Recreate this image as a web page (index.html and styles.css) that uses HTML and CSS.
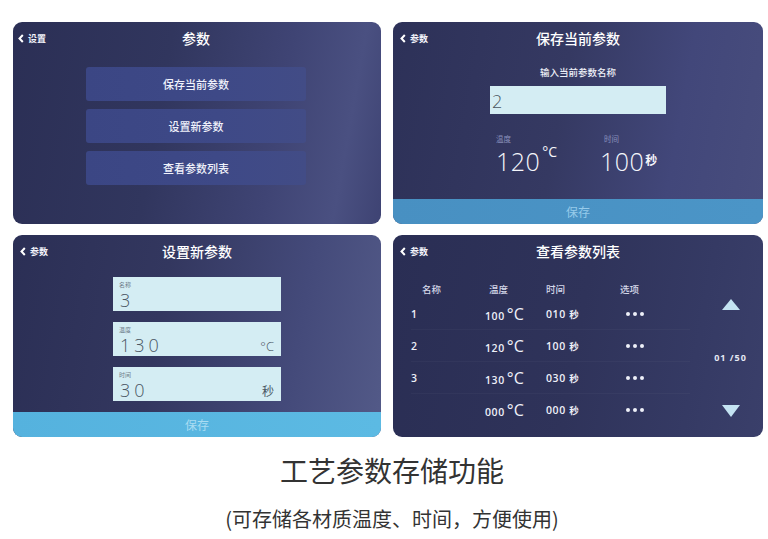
FILE: index.html
```html
<!DOCTYPE html>
<html lang="zh-CN">
<head>
<meta charset="utf-8">
<title>工艺参数存储功能</title>
<link rel="stylesheet" href="styles.css">
</head>
<body>
<div class="page">
  <div class="grid">
    <section class="panel p1">
      <header class="bar">
        <span class="back"><svg class="chev" viewBox="0 0 6 9" width="6" height="9"><path d="M4.8 1 L1.5 4.5 L4.8 8" fill="none" stroke="#fff" stroke-width="2"/></svg>设置</span>
        <h2 class="title">参数</h2>
        <span></span>
      </header>
      <div class="menu">
        <div class="menu-btn">保存当前参数</div>
        <div class="menu-btn">设置新参数</div>
        <div class="menu-btn">查看参数列表</div>
      </div>
    </section>

    <section class="panel p2">
      <header class="bar">
        <span class="back"><svg class="chev" viewBox="0 0 6 9" width="6" height="9"><path d="M4.8 1 L1.5 4.5 L4.8 8" fill="none" stroke="#fff" stroke-width="2"/></svg>参数</span>
        <h2 class="title">保存当前参数</h2>
        <span></span>
      </header>
      <div class="prompt">输入当前参数名称</div>
      <div class="name-input">2</div>
      <div class="readout">
        <div class="read temp">
          <div class="read-label">温度</div>
          <div class="read-value"><span class="num">120</span><span class="deg">°C</span></div>
        </div>
        <div class="read time">
          <div class="read-label">时间</div>
          <div class="read-value"><span class="num">100</span><span class="sec">秒</span></div>
        </div>
      </div>
      <div class="save save-dim">保存</div>
    </section>

    <section class="panel p3">
      <header class="bar">
        <span class="back"><svg class="chev" viewBox="0 0 6 9" width="6" height="9"><path d="M4.8 1 L1.5 4.5 L4.8 8" fill="none" stroke="#fff" stroke-width="2"/></svg>参数</span>
        <h2 class="title">设置新参数</h2>
        <span></span>
      </header>
      <div class="fields">
        <div class="field">
          <div class="f-label">名称</div>
          <div class="f-value">3</div>
          <div class="f-unit"></div>
        </div>
        <div class="field">
          <div class="f-label">温度</div>
          <div class="f-value">130</div>
          <div class="f-unit">°C</div>
        </div>
        <div class="field">
          <div class="f-label">时间</div>
          <div class="f-value">30</div>
          <div class="f-unit cjk">秒</div>
        </div>
      </div>
      <div class="save save-bright">保存</div>
    </section>

    <section class="panel p4">
      <header class="bar">
        <span class="back"><svg class="chev" viewBox="0 0 6 9" width="6" height="9"><path d="M4.8 1 L1.5 4.5 L4.8 8" fill="none" stroke="#fff" stroke-width="2"/></svg>参数</span>
        <h2 class="title">查看参数列表</h2>
        <span></span>
      </header>
      <div class="list">
        <div class="table">
          <div class="row head">
            <span class="c1 h1">名称</span>
            <span class="c2 h2c">温度</span>
            <span class="c3">时间</span>
            <span class="c4">选项</span>
          </div>
          <div class="row data">
            <span class="c1">1</span>
            <span class="c2">100<span class="tdeg">°C</span></span>
            <span class="c3">010 <span class="tsec">秒</span></span>
            <span class="c4 dots"><i></i><i></i><i></i></span>
          </div>
          <div class="row data">
            <span class="c1">2</span>
            <span class="c2">120<span class="tdeg">°C</span></span>
            <span class="c3">100 <span class="tsec">秒</span></span>
            <span class="c4 dots"><i></i><i></i><i></i></span>
          </div>
          <div class="row data">
            <span class="c1">3</span>
            <span class="c2">130<span class="tdeg">°C</span></span>
            <span class="c3">030 <span class="tsec">秒</span></span>
            <span class="c4 dots"><i></i><i></i><i></i></span>
          </div>
          <div class="row data">
            <span class="c1"></span>
            <span class="c2">000<span class="tdeg">°C</span></span>
            <span class="c3">000 <span class="tsec">秒</span></span>
            <span class="c4 dots"><i></i><i></i><i></i></span>
          </div>
        </div>
        <div class="pager">
          <svg class="tri" viewBox="0 0 18 11" width="18" height="11"><polygon points="9,0 18,11 0,11" fill="#c4e3f2"/></svg>
          <div class="page-no">01 /50</div>
          <svg class="tri" viewBox="0 0 18 12" width="18" height="12"><polygon points="0,0 18,0 9,12" fill="#c4e3f2"/></svg>
        </div>
      </div>
    </section>
  </div>

  <div class="caption">
    <h1 class="cap-title">工艺参数存储功能</h1>
    <p class="cap-sub">(可存储各材质温度、时间，方便使用)</p>
  </div>
</div>
</body>
</html>
```

FILE: styles.css
```css
* { box-sizing: border-box; margin: 0; padding: 0; }

html, body {
  background: #ffffff;
  width: 768px;
  height: 539px;
  overflow: hidden;
}

body {
  font-family: "Noto Sans CJK SC", "Noto Sans", sans-serif;
}

.page {
  padding: 22px 5px 0 13px;
}

.grid {
  display: grid;
  grid-template-columns: 368px 370px;
  grid-template-rows: 202px 202px;
  column-gap: 12px;
  row-gap: 11px;
}

.panel {
  border-radius: 9px;
  overflow: hidden;
  display: flex;
  flex-direction: column;
  color: #ffffff;
  background: linear-gradient(100deg, #2b2f55 0%, #31365e 40%, #3f4474 70%, #4a5081 88%, #3e4373 100%);
}

.p2 { background: linear-gradient(100deg, #2d3158 0%, #353962 45%, #42477a 75%, #484d7d 100%); }
.p3 { background: linear-gradient(100deg, #2b2f55 0%, #33375f 40%, #444a7a 75%, #535a88 100%); }
.p4 { background: linear-gradient(100deg, #2a2e54 0%, #2f335a 50%, #353a64 80%, #3a3f6a 100%); }

/* header */
.bar {
  height: 32px;
  display: grid;
  grid-template-columns: 1fr auto 1fr;
  align-items: center;
  padding: 0 7px;
}

.back {
  display: flex;
  align-items: center;
  gap: 4px;
  font-size: 9px;
  font-weight: 700;
  color: #f2f3fa;
}

.p1 .bar { padding-left: 5px; }

.title {
  font-size: 14px;
  font-weight: 500;
  color: #ffffff;
  line-height: 20px;
}

/* panel 1 */
.menu {
  display: flex;
  flex-direction: column;
  align-items: center;
  gap: 8px;
  padding-top: 13px;
  padding-right: 2px;
}

.menu-btn {
  width: 220px;
  height: 34px;
  border-radius: 3px;
  background: linear-gradient(90deg, #3b4684 0%, #3e4987 60%, #424c86 100%);
  display: flex;
  align-items: center;
  justify-content: center;
  font-size: 11px;
  font-weight: 500;
  color: #f0f2fb;
}

/* panel 2 */
.prompt {
  margin-top: 12px;
  text-align: center;
  font-size: 9.5px;
  line-height: 12px;
  font-weight: 500;
  color: #eef0f8;
}

.name-input {
  margin: 8px auto 0;
  width: 176px;
  height: 28px;
  background: #d4edf3;
  color: #4a5560;
  font-family: "Open Sans", "Liberation Sans", sans-serif;
  font-weight: 300;
  font-size: 18px;
  line-height: 30px;
  padding-left: 2px;
}

.readout {
  display: flex;
  margin-top: 19px;
  padding-left: 103px;
}

.read.temp { width: 104px; }
.read.time .read-label { padding-left: 4px; }

.read-label {
  font-size: 7.5px;
  line-height: 12px;
  color: #8b92bd;
}

.read-value {
  display: flex;
  align-items: flex-start;
  margin-top: 4px;
  font-family: "Open Sans", "Liberation Sans", sans-serif;
  color: #f4f6fb;
}

.read-value .num {
  font-size: 25px;
  font-weight: 300;
  line-height: 25px;
  letter-spacing: 0.5px;
}

.read-value .deg {
  font-size: 14px;
  line-height: 14px;
  margin-left: 2px;
  margin-top: -4px;
  font-weight: 400;
}

.read-value .sec {
  font-family: "Noto Sans CJK SC", sans-serif;
  font-size: 12px;
  font-weight: 700;
  line-height: 12px;
  margin-top: 5px;
  margin-left: 1px;
}

.save {
  margin-top: auto;
  height: 25px;
  display: flex;
  align-items: center;
  justify-content: center;
  font-size: 12px;
}

.save-dim {
  background: linear-gradient(90deg, #4890c2 0%, #4b95c7 100%);
  color: #97cbea;
}

.save-bright {
  background: linear-gradient(90deg, #55b2de 0%, #5cbae3 100%);
  color: #a9dcf2;
}

/* panel 3 */
.fields {
  display: flex;
  flex-direction: column;
  align-items: center;
  gap: 11px;
  padding-top: 10px;
}

.field {
  width: 168px;
  height: 34px;
  background: #d4edf3;
  display: grid;
  grid-template-columns: 1fr auto;
  grid-template-rows: 8px 22px;
  padding: 4px 7px 0 6px;
  color: #4a5663;
}

.f-label {
  grid-column: 1 / 3;
  font-size: 6px;
  line-height: 8px;
  color: #6d7b89;
}

.f-value {
  font-family: "Open Sans", "Liberation Sans", sans-serif;
  font-weight: 300;
  font-size: 18px;
  line-height: 22px;
  letter-spacing: 4px;
  padding-left: 1px;
}

.f-unit {
  font-family: "Open Sans", "Liberation Sans", sans-serif;
  font-weight: 300;
  font-size: 13px;
  line-height: 22px;
  padding-top: 1px;
}

.f-unit.cjk {
  font-family: "Noto Sans CJK SC", sans-serif;
  font-weight: 400;
  font-size: 12px;
}

/* panel 4 */
.list {
  flex: 1;
  display: flex;
}

.table {
  flex: 1;
  padding-left: 18px;
  padding-top: 13px;
  padding-right: 10px;
}

.row {
  display: grid;
  grid-template-columns: 74px 61px 74px 40px;
  align-items: center;
}

.row.head {
  height: 18px;
  font-size: 9.5px;
  font-weight: 500;
  color: #d6d9ea;
}

.row.data {
  height: 32px;
  border-bottom: 1px solid rgba(255, 255, 255, 0.03);
  font-family: "Open Sans", "Liberation Sans", sans-serif;
  font-size: 10.5px;
  font-weight: 600;
  color: #eef0f8;
  letter-spacing: 0.6px;
}

.row.data:last-child { border-bottom: none; }

.h1 { padding-left: 11px; }
.h2c { padding-left: 4px; }

.tdeg {
  font-size: 16px;
  font-weight: 400;
  letter-spacing: 0;
  margin-left: 2px;
}

.tsec {
  font-family: "Noto Sans CJK SC", sans-serif;
  font-size: 9.5px;
  font-weight: 700;
}

.dots {
  display: flex;
  gap: 3px;
  padding-left: 6px;
}

.dots i {
  display: block;
  width: 4px;
  height: 4px;
  border-radius: 50%;
  background: #eef0f8;
}

.pager {
  width: 63px;
  display: flex;
  flex-direction: column;
  align-items: center;
  padding-top: 32px;
  padding-right: 2px;
}

.page-no {
  margin-top: 42px;
  margin-bottom: 41px;
  font-family: "Open Sans", "Liberation Sans", sans-serif;
  font-size: 9px;
  font-weight: 700;
  letter-spacing: 1px;
  color: #e6e9f4;
  line-height: 12px;
}

/* caption */
.caption {
  text-align: center;
  padding-left: 8px;
  color: #333333;
}

.cap-title {
  margin-top: 16px;
  font-size: 28px;
  font-weight: 400;
  line-height: 34px;
  letter-spacing: 0;
}

.cap-sub {
  margin-top: 20px;
  font-size: 20px;
  line-height: 24px;
  font-weight: 400;
}
```
